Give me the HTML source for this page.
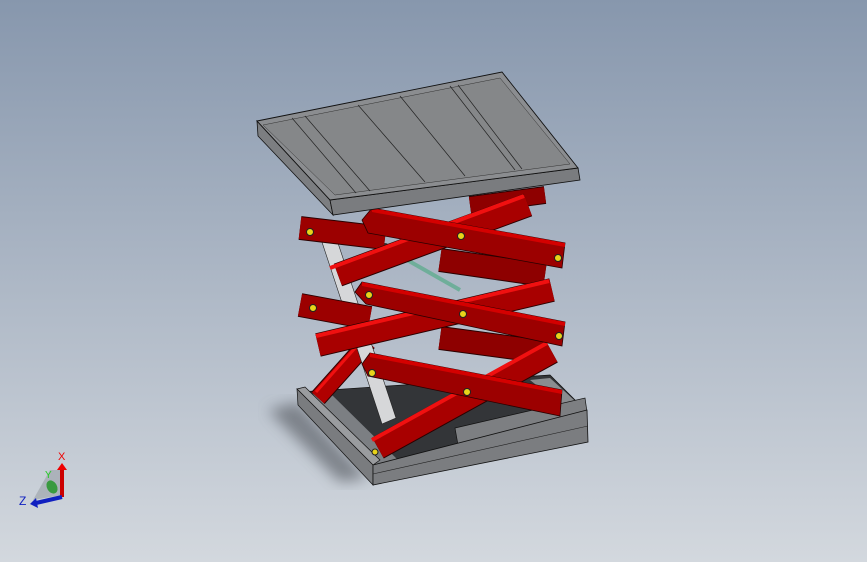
<!DOCTYPE html><html><head><style>
html,body{margin:0;padding:0;width:867px;height:562px;overflow:hidden}
body{background:linear-gradient(180deg,#8797ad 0%,#a9b4c3 45%,#d3d8de 100%)}
svg{position:absolute;left:0;top:0}
</style></head><body>
<svg width="867" height="562" viewBox="0 0 867 562">
<defs><filter id="b"><feGaussianBlur stdDeviation="7"/></filter></defs>
<polygon points="268,410 298,402 368,478 340,482" fill="#60656c" filter="url(#b)" opacity="0.7"/>
<polygon points="300,392 550,375 585,410 375,465" fill="#333538" stroke="#111" stroke-width="0.7"/>
<polygon points="305,395 330,393 400,462 375,465" fill="#7c7f83"/>
<polygon points="530,380 550,378 585,410 570,412" fill="#8a8d90"/>
<polygon points="455,428 585,398 587,412 458,445" fill="#7d7f82" stroke="#111" stroke-width="0.7"/>
<polygon points="297,389 305,387 380,460 373,465" fill="#9a9c9f" stroke="#111" stroke-width="0.7"/>
<polygon points="297,389 373,465 373,485 298,405" fill="#7a7c7f" stroke="#111" stroke-width="0.7"/>
<polygon points="373,465 587,410 588,442 373,485" fill="#7b7d80" stroke="#111" stroke-width="0.8"/>
<line x1="373" y1="474" x2="588" y2="426" stroke="#222" stroke-width="0.6"/>
<g stroke-linecap="butt">
<line x1="318" y1="398" x2="368" y2="342" stroke="#2a0000" stroke-width="18"/>
<line x1="318" y1="398" x2="368" y2="342" stroke="#b00000" stroke-width="16"/>
<line x1="316" y1="392" x2="364" y2="338" stroke="#f01010" stroke-width="3"/>
<line x1="440" y1="338" x2="545" y2="352" stroke="#2a0000" stroke-width="24"/>
<line x1="440" y1="338" x2="545" y2="352" stroke="#8e0000" stroke-width="22"/>
<line x1="440" y1="260" x2="545" y2="275" stroke="#2a0000" stroke-width="24"/>
<line x1="440" y1="260" x2="545" y2="275" stroke="#8e0000" stroke-width="22"/>
<line x1="470" y1="205" x2="545" y2="195" stroke="#2a0000" stroke-width="18"/>
<line x1="470" y1="205" x2="545" y2="195" stroke="#8e0000" stroke-width="16"/>
</g>
<polygon points="318,230 332,225 396,418 382,424" fill="#d6d7d9" stroke="#222" stroke-width="0.6"/>
<line x1="372" y1="240" x2="460" y2="290" stroke="#6fae9a" stroke-width="4"/>
<circle cx="385" cy="248" r="5" fill="#333" />
<g stroke-linecap="butt">
<line x1="300" y1="228" x2="385" y2="238" stroke="#2a0000" stroke-width="24"/>
<line x1="300" y1="228" x2="385" y2="238" stroke="#9c0000" stroke-width="22"/>
<line x1="300" y1="305" x2="370" y2="318" stroke="#2a0000" stroke-width="24"/>
<line x1="300" y1="305" x2="370" y2="318" stroke="#9c0000" stroke-width="22"/>
</g>
<g stroke-linecap="butt">
<line x1="338" y1="275" x2="528" y2="205" stroke="#2a0000" stroke-width="24"/>
<line x1="338" y1="275" x2="528" y2="205" stroke="#a80000" stroke-width="22"/>
<line x1="330" y1="268" x2="524" y2="196" stroke="#f01010" stroke-width="4"/>
<line x1="318" y1="345" x2="552" y2="290" stroke="#2a0000" stroke-width="24"/>
<line x1="318" y1="345" x2="552" y2="290" stroke="#a80000" stroke-width="22"/>
<line x1="316" y1="336" x2="549" y2="281" stroke="#f01010" stroke-width="4"/>
<line x1="378" y1="448" x2="552" y2="352" stroke="#2a0000" stroke-width="24"/>
<line x1="378" y1="448" x2="552" y2="352" stroke="#a80000" stroke-width="22"/>
<line x1="372" y1="440" x2="547" y2="343" stroke="#f01010" stroke-width="4"/>
</g>
<g>
<polygon points="372,208 565,243 562,268 368,233 362,220" fill="#9c0000" stroke="#2a0000" stroke-width="0.8"/>
<polygon points="372,208 565,243 565,247 372,212" fill="#d40000"/>
<polygon points="362,282 565,322 562,346 366,304 355,292" fill="#9c0000" stroke="#2a0000" stroke-width="0.8"/>
<polygon points="362,282 565,322 565,326 362,286" fill="#d40000"/>
<polygon points="370,353 562,390 560,416 368,376 362,364" fill="#9c0000" stroke="#2a0000" stroke-width="0.8"/>
<polygon points="370,353 562,390 562,394 370,357" fill="#d40000"/>
</g>
<g fill="#e8d31a" stroke="#222" stroke-width="1">
<circle cx="310" cy="232" r="3.5"/><circle cx="461" cy="236" r="3.5"/><circle cx="558" cy="258" r="3.5"/>
<circle cx="313" cy="308" r="3.5"/><circle cx="369" cy="295" r="3.5"/><circle cx="463" cy="314" r="3.5"/><circle cx="559" cy="336" r="3.5"/>
<circle cx="372" cy="373" r="3.5"/><circle cx="467" cy="392" r="3.5"/><circle cx="375" cy="452" r="3"/>
</g>
<polygon points="257,121 330,200 333,215 258,136" fill="#7c7e81" stroke="#111" stroke-width="0.8"/>
<polygon points="330,200 578,168 580,180 333,215" fill="#7a7c7f" stroke="#111" stroke-width="0.8"/>
<polygon points="257,121 502,72 578,168 330,200" fill="#8b8d90" stroke="#111" stroke-width="0.9"/>
<polygon points="263,125 500,78 570,164 335,195" fill="#858789" stroke="#333" stroke-width="0.5"/>
<g stroke="#222" stroke-width="0.7">
<line x1="292" y1="118" x2="356" y2="193"/><line x1="305" y1="116" x2="370" y2="191"/>
<line x1="358" y1="105" x2="425" y2="182"/><line x1="400" y1="96" x2="465" y2="176"/>
<line x1="450" y1="86" x2="515" y2="170"/><line x1="458" y1="85" x2="522" y2="169"/>
</g>
<polygon points="50,470 62,470 62,495 33,500" fill="#9aa0a6" opacity="0.6"/>
<line x1="62" y1="497" x2="62" y2="468" stroke="#c00" stroke-width="4"/>
<polygon points="57,470 62,463 67,470" fill="#e00"/>
<line x1="62" y1="497" x2="36" y2="503" stroke="#1020c0" stroke-width="4"/>
<polygon points="36,498 30,504 38,508" fill="#1020c0"/>
<ellipse cx="52" cy="487" rx="5" ry="7" fill="#3a9a40" transform="rotate(-30 52 487)"/>
<text x="58" y="460" font-family="Liberation Sans,sans-serif" font-size="11" fill="#e00">X</text>
<text x="45" y="478" font-family="Liberation Sans,sans-serif" font-size="10" fill="#2c2">Y</text>
<text x="19" y="505" font-family="Liberation Sans,sans-serif" font-size="12" fill="#1020c0">Z</text>
</svg>
</body></html>
